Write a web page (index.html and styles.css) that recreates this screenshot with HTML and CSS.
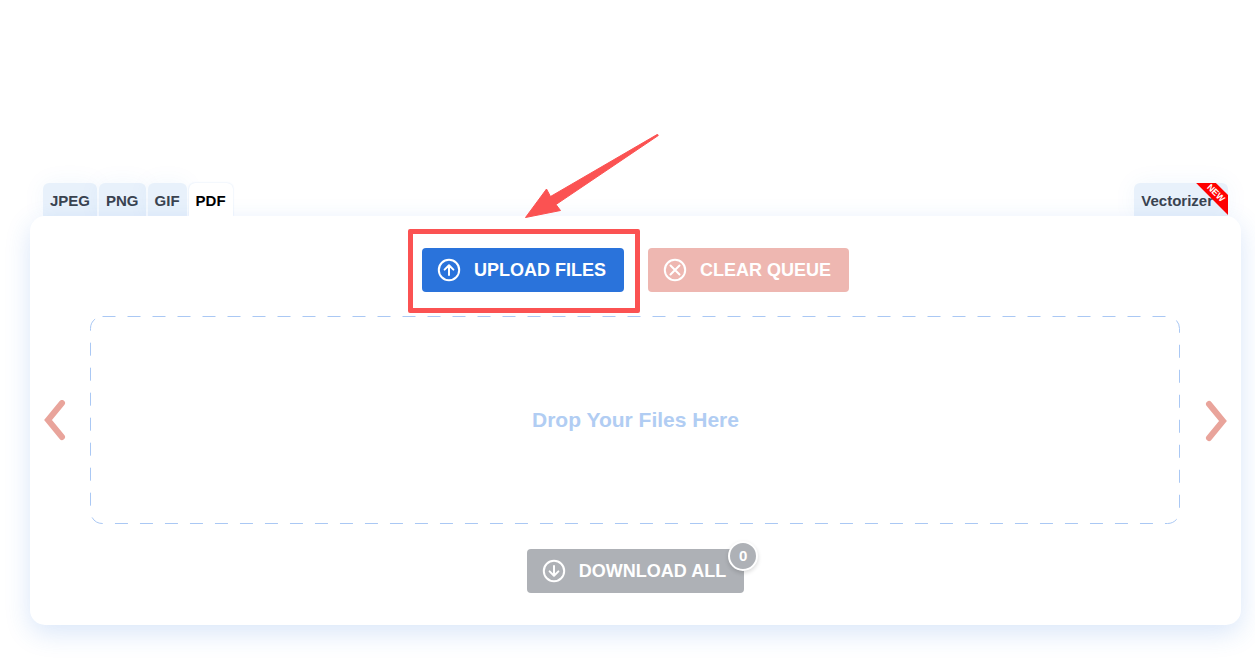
FILE: index.html
```
<!DOCTYPE html>
<html lang="en">
<head>
    <meta charset="UTF-8">
    <meta name="viewport" content="width=device-width, initial-scale=1.0">
    <title>PDF Compressor</title>
    <link rel="stylesheet" href="styles.css">
</head>
<body>
    <main class="container">
        <nav class="tabs">
            <a href="#jpeg" class="tab">JPEG</a>
            <a href="#png" class="tab">PNG</a>
            <a href="#gif" class="tab">GIF</a>
            <a href="#pdf" class="tab active">PDF</a>
            <a href="#vectorizer" class="tab tab-right">Vectorizer<span class="ribbon">NEW</span></a>
        </nav>

        <section class="panel">
            <div class="actions">
                <div class="highlight">
                    <button type="button" class="btn btn-upload">
                        <svg class="btn-icon" viewBox="0 0 24 24">
                            <circle cx="12" cy="12" r="10.2"/>
                            <path d="M12 17V7.4M7.6 11.6L12 7.2l4.4 4.4"/>
                        </svg>
                        UPLOAD FILES
                    </button>
                    <svg class="arrow" viewBox="0 0 134 84">
                        <path d="M0.500 83.500L21.500 55l4 7.500L132.500 0.300l.8 1.200L31 70.500l4.500 6z"/>
                    </svg>
                </div>
                <button type="button" class="btn btn-clear">
                    <svg class="btn-icon" viewBox="0 0 24 24">
                        <circle cx="12" cy="12" r="10.2"/>
                        <path d="M7.5 7.5l9 9M16.5 7.5l-9 9"/>
                    </svg>
                    CLEAR QUEUE
                </button>
            </div>

            <div class="queue">
                <button type="button" class="nav-btn" aria-label="Previous">
                    <svg viewBox="0 0 22 42"><path d="M18 3L4 20l14 17"/></svg>
                </button>
                <div class="dropzone">
                    <svg class="dropzone-border"><rect x="0.5" y="0.5" rx="12" ry="12"/></svg>
                    <p>Drop Your Files Here</p>
                </div>
                <button type="button" class="nav-btn next" aria-label="Next">
                    <svg viewBox="0 0 22 42"><path d="M4 4l14 17L4 38"/></svg>
                </button>
            </div>

            <div class="actions">
                <button type="button" class="btn btn-download">
                    <svg class="btn-icon" viewBox="0 0 24 24">
                        <circle cx="12" cy="12" r="10.2"/>
                        <path d="M12 7v9.600M7.600 12.400l4.400 4.400 4.400-4.400"/>
                    </svg>
                    DOWNLOAD ALL
                    <span class="count">0</span>
                </button>
            </div>
        </section>
    </main>
</body>
</html>
```
FILE: styles.css
```
* {
    margin: 0;
    padding: 0;
    box-sizing: border-box;
}

body {
    font-family: "Liberation Sans", Arial, sans-serif;
    font-weight: 700;
    background: #fff;
}

.container {
    padding: 183px 14px 40px 30px;
}

/* Format tabs */
.tabs {
    display: flex;
    gap: 2px;
    padding: 0 13px;
}

.tab {
    position: relative;
    height: 33px;
    padding: 0 7px;
    border-radius: 6px 6px 0 0;
    background: #e8f1fb;
    color: #3a4350;
    font-size: 15px;
    line-height: 35px;
    text-decoration: none;
    box-shadow: 0 0 24px rgba(42, 115, 219, 0.06);
}

.tab.active {
    z-index: 2;
    background: #fff;
    color: #000;
    box-shadow: 0 0 2px rgba(42, 115, 219, 0.2);
    clip-path: inset(-2px -2px 0 -2px);
}

.tab-right {
    margin-left: auto;
    padding-right: 15px;
    overflow: hidden;
}

.ribbon {
    position: absolute;
    top: 3px;
    right: -18px;
    width: 60px;
    height: 14px;
    background: #f00;
    color: #fff;
    font-size: 9px;
    font-weight: 900;
    line-height: 14px;
    text-align: center;
    transform: rotate(45deg);
}

/* Panel */
.panel {
    position: relative;
    z-index: 1;
    display: flex;
    flex-direction: column;
    gap: 24px;
    padding: 32px 0;
    border-radius: 15px;
    background: #fff;
    box-shadow: 0 8px 26px rgba(42, 115, 219, 0.18);
}

.actions {
    display: flex;
    justify-content: center;
    gap: 24px;
}

.btn {
    position: relative;
    display: flex;
    align-items: center;
    height: 44px;
    padding: 0 18px 0 15px;
    border: none;
    border-radius: 4px;
    color: #fff;
    font-family: inherit;
    font-size: 18px;
    font-weight: 700;
    white-space: nowrap;
    cursor: pointer;
}

.btn-upload {
    background: #2a73db;
}

.btn-clear {
    background: #eeb7b1;
}

.btn-download {
    background: #aeb1b6;
}

.btn-icon {
    width: 24px;
    height: 24px;
    margin-right: 13px;
    fill: none;
    stroke: #fff;
    stroke-width: 2;
    stroke-linecap: round;
    stroke-linejoin: round;
}

.count {
    position: absolute;
    top: -8px;
    right: -14px;
    width: 30px;
    height: 30px;
    border: 2px solid #fff;
    border-radius: 50%;
    background: #aeb1b6;
    font-size: 15px;
    line-height: 26px;
    text-align: center;
    box-shadow: 0 2px 4px rgba(0, 0, 0, 0.15);
}

/* Callout around the upload button */
.highlight {
    position: relative;
}

.highlight::before {
    content: '';
    position: absolute;
    inset: -19px -16px -21px -14px;
    border: 5px solid #fb5252;
    border-radius: 2px;
    pointer-events: none;
}

.arrow {
    position: absolute;
    left: 103px;
    bottom: 74px;
    z-index: 2;
    width: 134px;
    height: 84px;
    fill: #fb5252;
    stroke: #fb5252;
    stroke-width: 1;
    stroke-linejoin: round;
    pointer-events: none;
}

/* Drop area */
.queue {
    display: grid;
    grid-template-columns: 60px 1fr 60px;
    align-items: center;
}

.nav-btn {
    width: 50px;
    height: 60px;
    border: none;
    background: none;
    cursor: pointer;
}

.nav-btn.next {
    justify-self: end;
}

.nav-btn svg {
    display: block;
    width: 22px;
    height: 42px;
    margin: 0 auto;
    fill: none;
    stroke: #e9a49b;
    stroke-width: 6;
    stroke-linecap: round;
}

.dropzone {
    position: relative;
    display: flex;
    align-items: center;
    justify-content: center;
    height: 209px;
    padding-bottom: 2px;
    color: #b1cdf3;
    font-size: 21px;
}

.dropzone-border {
    position: absolute;
    inset: 0;
    width: 100%;
    height: 100%;
}

.dropzone-border rect {
    width: calc(100% - 2px);
    height: calc(100% - 2px);
    fill: none;
    stroke: #aac8f4;
    stroke-dasharray: 13 12;
}
```
